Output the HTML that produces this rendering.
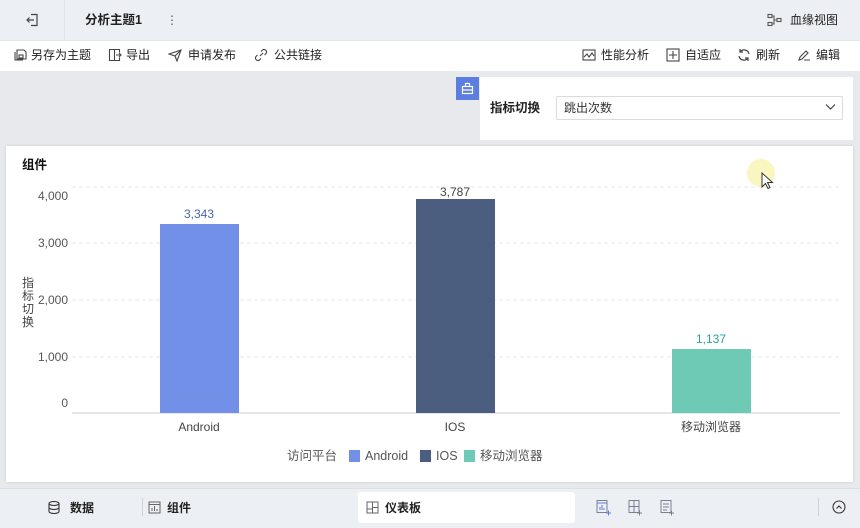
<!DOCTYPE html>
<html><head><meta charset="utf-8"><style>
*{box-sizing:border-box;margin:0;padding:0}
body{width:860px;height:528px;overflow:hidden;background:#e8e9ec;font-family:"Liberation Sans","Noto Sans CJK SC",sans-serif;font-size:12px;color:#222;position:relative}
.abs{position:absolute;line-height:14px}
svg{display:block}
</style></head><body>
<div class="abs" style="left:0;top:0;width:860px;height:41px;background:#eceff4;border-bottom:1px solid #e2e5ea"></div>
<div class="abs" style="left:64px;top:0;width:1px;height:41px;background:#e0e3e8"></div>
<svg class="abs" style="left:25px;top:13px" width="14" height="14" viewBox="0 0 14 14" fill="none" stroke="#444" stroke-width="1.2"><path d="M6 1.5h6v11H6M9 7H2M4.5 4.5 2 7l2.5 2.5"/></svg>
<div class="abs" style="left:85px;top:13px;font-weight:bold;font-size:12.5px;color:#222">分析主题1</div>
<div class="abs" style="left:166px;top:13px;font-size:12px;color:#555">⋮</div>
<svg class="abs" style="left:767px;top:13px" width="16" height="14" viewBox="0 0 16 14" fill="none" stroke="#555" stroke-width="1.1"><rect x="1" y="1.5" width="4" height="3"/><rect x="1" y="9.5" width="4" height="3"/><rect x="10" y="5.5" width="4" height="3"/><path d="M5 3h2v8H5M7 7h3"/></svg>
<div class="abs" style="left:790px;top:13px;color:#222">血缘视图</div>

<div class="abs" style="left:0;top:41px;width:860px;height:30px;background:#fff"></div>
<div class="abs" style="left:13px;top:48px;display:flex;gap:0;align-items:center;color:#222">
<svg width="14" height="14" viewBox="0 0 14 14" fill="none" stroke="#444" stroke-width="1.1"><path d="M2 4v8h8M4 2h7l2 2v7H4z"/><rect x="6" y="7" width="4" height="3"/></svg><span style="margin-left:4px">另存为主题</span>
<svg style="margin-left:17px" width="14" height="14" viewBox="0 0 14 14" fill="none" stroke="#444" stroke-width="1.1"><path d="M1.5 1.5h5v11h-5zM6.5 1.5h5v3M11.5 9.5v3h-5M8 7h5M11 5l2 2-2 2"/></svg><span style="margin-left:4px">导出</span>
<svg style="margin-left:18px" width="14" height="14" viewBox="0 0 14 14" fill="none" stroke="#444" stroke-width="1.1"><path d="M1 6l12-4-4 11-2-5zM7 8l6-6"/></svg><span style="margin-left:6px">申请发布</span>
<svg style="margin-left:18px" width="14" height="14" viewBox="0 0 14 14" fill="none" stroke="#444" stroke-width="1.1"><path d="M6 8l3-3M7 3.5l1.5-1.5a2.5 2.5 0 013.5 3.5L10.5 7M7 10.5L5.5 12A2.5 2.5 0 012 8.5L3.5 7"/></svg><span style="margin-left:6px">公共链接</span>
</div>
<div class="abs" style="left:582px;top:48px;display:flex;align-items:center;color:#222">
<svg width="14" height="14" viewBox="0 0 14 14" fill="none" stroke="#444" stroke-width="1.1"><rect x="1" y="2" width="12" height="10"/><path d="M2 9l3-3 2 3 3-4 2 3"/></svg><span style="margin-left:5px">性能分析</span>
<svg style="margin-left:17px" width="14" height="14" viewBox="0 0 14 14" fill="none" stroke="#444" stroke-width="1.1"><rect x="1" y="1" width="12" height="12"/><path d="M7 3v8M3 7h8"/></svg><span style="margin-left:5px">自适应</span>
<svg style="margin-left:16px" width="14" height="14" viewBox="0 0 14 14" fill="none" stroke="#444" stroke-width="1.2"><path d="M12 6a5 5 0 00-9-2M2 8a5 5 0 009 2M3 1v3h3M11 13v-3H8"/></svg><span style="margin-left:5px">刷新</span>
<svg style="margin-left:17px" width="14" height="14" viewBox="0 0 14 14" fill="none" stroke="#444" stroke-width="1.1"><path d="M2 12l1-3 6-6 2 2-6 6zM7 12h6"/></svg><span style="margin-left:5px">编辑</span>
</div>

<div class="abs" style="left:456px;top:77px;width:23px;height:23px;background:#5b7ee0"></div>
<svg class="abs" style="left:461px;top:82px" width="13" height="13" viewBox="0 0 13 13" fill="none" stroke="#fff" stroke-width="1.2"><rect x="1.5" y="4.5" width="10" height="7"/><path d="M4.5 4.5V1.5h4v3M1.5 8h10"/></svg>
<div class="abs" style="left:480px;top:77px;width:373px;height:63px;background:#fff"></div>
<div class="abs" style="left:490px;top:101px;font-weight:bold;font-size:12.5px">指标切换</div>
<div class="abs" style="left:556px;top:96px;width:287px;height:24px;border:1px solid #d8dbe0;border-radius:2px;background:#fff;padding:4px 0 0 7px;font-size:12px;color:#333">跳出次数</div>
<svg class="abs" style="left:825px;top:103px" width="11" height="8" viewBox="0 0 11 8" fill="none" stroke="#444" stroke-width="1.2"><path d="M1 1.5l4.5 4.5L10 1.5"/></svg>

<div class="abs" style="left:6px;top:146px;width:847px;height:336px;background:#fff;box-shadow:0 0 3px rgba(0,0,0,.12)"></div>
<div class="abs" style="left:22px;top:158px;font-weight:bold;font-size:12.5px;color:#111">组件</div>
<svg class="abs" style="left:0;top:0" width="860" height="480">
<g stroke="#e6e8ee" stroke-dasharray="4 3"><path d="M72 187H840M72 243H840M72 300H840M72 357H840"/></g>
<path d="M72 413H840" stroke="#c8ccd4"/>
<g font-family="Liberation Sans,sans-serif" font-size="12" fill="#555" text-anchor="end"><text x="68" y="200">4,000</text><text x="68" y="247">3,000</text><text x="68" y="304">2,000</text><text x="68" y="361">1,000</text><text x="68" y="407">0</text></g>
<rect x="160" y="224" width="79" height="189" fill="#7390e8"/>
<rect x="416" y="199" width="79" height="214" fill="#4b5e80"/>
<rect x="672" y="349" width="79" height="64" fill="#6ecab5"/>
<g font-family="Liberation Sans,sans-serif" font-size="12" text-anchor="middle"><text x="199" y="218" fill="#4b66b8">3,343</text><text x="455" y="196" fill="#444">3,787</text><text x="711" y="343" fill="#2aa2a0">1,137</text>
<text x="199" y="431" fill="#444">Android</text><text x="455" y="431" fill="#444">IOS</text><text x="711" y="431" fill="#444" font-family="Liberation Sans,Noto Sans CJK SC,sans-serif">移动浏览器</text></g>
<g font-family="Liberation Sans,Noto Sans CJK SC,sans-serif" font-size="12" fill="#444"><text x="22" y="287">指</text><text x="22" y="300">标</text><text x="22" y="313">切</text><text x="22" y="326">换</text></g>
<g font-family="Liberation Sans,Noto Sans CJK SC,sans-serif" font-size="12.5" fill="#555"><text x="287" y="460">访问平台</text>
<rect x="349" y="450" width="11" height="12" fill="#7390e8"/><text x="365" y="460">Android</text>
<rect x="420" y="450" width="11" height="12" fill="#4b5e80"/><text x="436" y="460">IOS</text>
<rect x="464" y="450" width="11" height="12" fill="#6ecab5"/><text x="480" y="460">移动浏览器</text></g>
<circle cx="761" cy="173" r="14" fill="#f7f4b0" opacity=".8"/>
<path d="M762 173v14l3.5-3.5 2.5 5 2-1-2.5-5h5z" fill="#fff" stroke="#333" stroke-width="1"/>
</svg>

<div class="abs" style="left:0;top:488px;width:860px;height:40px;background:#eceff4;border-top:1px solid #dcdfe5"></div>
<svg class="abs" style="left:48px;top:501px" width="12" height="13" viewBox="0 0 12 13" fill="none" stroke="#333" stroke-width="1.1"><ellipse cx="6" cy="2.5" rx="5" ry="2"/><path d="M1 2.5v8c0 1 2 2 5 2s5-1 5-2v-8M1 6.5c0 1 2 2 5 2s5-1 5-2"/></svg>
<div class="abs" style="left:70px;top:501px;font-weight:bold;color:#222">数据</div>
<div class="abs" style="left:142px;top:498px;width:1px;height:18px;background:#d0d3d9"></div>
<svg class="abs" style="left:148px;top:501px" width="13" height="13" viewBox="0 0 13 13" fill="none" stroke="#666" stroke-width="1"><rect x="1" y="1" width="11" height="11"/><path d="M1 3.5h11M4 10V7M6.5 10V5M9 10V8"/></svg>
<div class="abs" style="left:167px;top:501px;font-weight:bold;color:#222">组件</div>
<div class="abs" style="left:358px;top:492px;width:217px;height:31px;background:#fff;border-radius:3px"></div>
<svg class="abs" style="left:366px;top:501px" width="13" height="13" viewBox="0 0 13 13" fill="none" stroke="#666" stroke-width="1"><rect x="1" y="1" width="11" height="11"/><path d="M6.5 1v11M6.5 6.5h5.5M1 8h5.5"/></svg>
<div class="abs" style="left:385px;top:501px;font-weight:bold;color:#222">仪表板</div>
<svg class="abs" style="left:596px;top:499px" width="80" height="17" viewBox="0 0 80 17" fill="none" stroke="#7a8090" stroke-width="1"><rect x="1" y="1.5" width="10" height="12"/><path d="M1 4h10M4 11V8M6 11V6M8 11V9M10 14h5M12.5 11.5v5" stroke="#5b7ee0"/><rect x="33" y="1.5" width="10" height="12"/><path d="M38 1.5v12M33 7.5h10M41 14h5M43.5 11.5v5"/><rect x="65" y="1.5" width="10" height="12"/><path d="M67 5h6M67 8h6M67 11h4M73 14h5M75.5 11.5v5"/></svg>
<div class="abs" style="left:818px;top:498px;width:1px;height:18px;background:#d0d3d9"></div>
<svg class="abs" style="left:832px;top:500px" width="14" height="14" viewBox="0 0 14 14" fill="none" stroke="#333" stroke-width="1.1"><circle cx="7" cy="7" r="6"/><path d="M4.5 8.5L7 6l2.5 2.5"/></svg>
</body></html>
